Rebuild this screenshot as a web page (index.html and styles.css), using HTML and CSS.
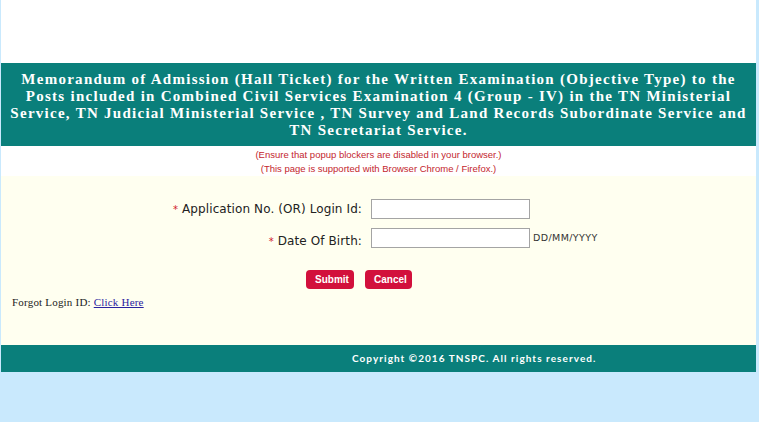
FILE: index.html
```html
<!DOCTYPE html>
<html>
<head>
<meta charset="utf-8">
<link rel="stylesheet" href="styles.css">
</head>
<body>
<div class="page">
  <div class="top"></div>
  <div class="header">
    <h1>Memorandum of Admission (Hall Ticket) for the Written Examination (Objective Type) to the<br>Posts included in Combined Civil Services Examination 4 (Group - IV) in the TN Ministerial<br>Service, TN Judicial Ministerial Service , TN Survey and Land Records Subordinate Service and<br>TN Secretariat Service.</h1>
  </div>
  <div class="notes">
    <p>(Ensure that popup blockers are disabled in your browser.)</p>
    <p>(This page is supported with Browser Chrome / Firefox.)</p>
  </div>
  <div class="main">
    <div class="form">
      <div class="row">
        <label class="label"><span class="req">*</span> Application No. (OR) Login Id:</label>
        <input class="field" type="text">
      </div>
      <div class="row row-low">
        <label class="label"><span class="req">*</span> Date Of Birth:</label>
        <input class="field" type="text">
        <span class="hint">DD/MM/YYYY</span>
      </div>
      <div class="buttons">
        <button class="btn">Submit</button>
        <button class="btn">Cancel</button>
      </div>
    </div>
    <p class="forgot">Forgot Login ID: <a href="#">Click Here</a></p>
  </div>
  <div class="footer">Copyright ©2016 TNSPC. All rights reserved.</div>
</div>
</body>
</html>
```

FILE: styles.css
```css
html, body {
  margin: 0;
  padding: 0;
  background: #c9e9fd;
}
.page {
  width: 755px;
  margin-left: 1px;
  background: #ffffff;
}
.top {
  height: 63px;
  background: #ffffff;
}
.header {
  background: #0a7f7b;
  height: 83px;
  display: flex;
  align-items: center;
  justify-content: center;
}
.header h1 {
  margin: 0;
  padding-top: 1px;
  color: #ffffff;
  font-family: "Liberation Serif", "Times New Roman", serif;
  font-weight: bold;
  font-size: 15px;
  line-height: 17px;
  letter-spacing: 1.27px;
  text-align: center;
  white-space: nowrap;
}
.notes {
  height: 30px;
  background: #ffffff;
  text-align: center;
  font-family: "Liberation Sans", Arial, sans-serif;
  font-size: 9.5px;
  color: #c4262e;
  padding-top: 2px;
  box-sizing: border-box;
}
.notes p {
  margin: 0;
  line-height: 14px;
}
.main {
  background: #fffff0;
  height: 169px;
  padding-top: 23px;
  box-sizing: border-box;
}
.form {
  display: flex;
  flex-direction: column;
  gap: 9px;
}
.row {
  display: flex;
  align-items: center;
}
.row-low {
  align-items: flex-end;
}
.row-low .label {
  line-height: 12px;
}
.row-low .hint {
  align-self: center;
  margin-top: -2px;
}
.label {
  width: 370px;
  text-align: right;
  font-family: "DejaVu Sans", Verdana, sans-serif;
  font-size: 12px;
  color: #222222;
  padding-right: 9px;
  box-sizing: border-box;
  letter-spacing: 0.1px;
}
.req {
  color: #d0202a;
  font-size: 10px;
}
.field {
  width: 159px;
  height: 20px;
  margin: 0;
  padding: 0;
  box-sizing: border-box;
  border: 1px solid #a4a4a4;
  background: #ffffff;
}
.hint {
  margin-left: 3px;
  font-family: "DejaVu Sans", Verdana, sans-serif;
  font-size: 9.5px;
  color: #333333;
  letter-spacing: 0.4px;
}
.buttons {
  display: flex;
  gap: 11px;
  padding-left: 305px;
  margin-top: 13px;
}
.btn {
  height: 19px;
  padding: 0 9px;
  border: none;
  border-radius: 4px;
  background: #d2103c;
  color: #ffffff;
  font-family: "Liberation Sans", Arial, sans-serif;
  font-weight: bold;
  font-size: 10px;
}
.btn:first-child {
  width: 48px;
}
.btn:last-child {
  width: 47px;
}
.forgot {
  margin: 7px 0 0 11px;
  font-family: "Liberation Serif", "Times New Roman", serif;
  font-size: 11px;
  letter-spacing: 0.2px;
  color: #222222;
}
.forgot a {
  color: #2a22a0;
}
.footer {
  height: 27px;
  background: #0a7f7b;
  color: #ffffff;
  font-family: Lato, "DejaVu Sans", sans-serif;
  font-weight: bold;
  font-size: 10px;
  letter-spacing: 1.05px;
  line-height: 27px;
  padding-left: 351px;
  box-sizing: border-box;
}
```
